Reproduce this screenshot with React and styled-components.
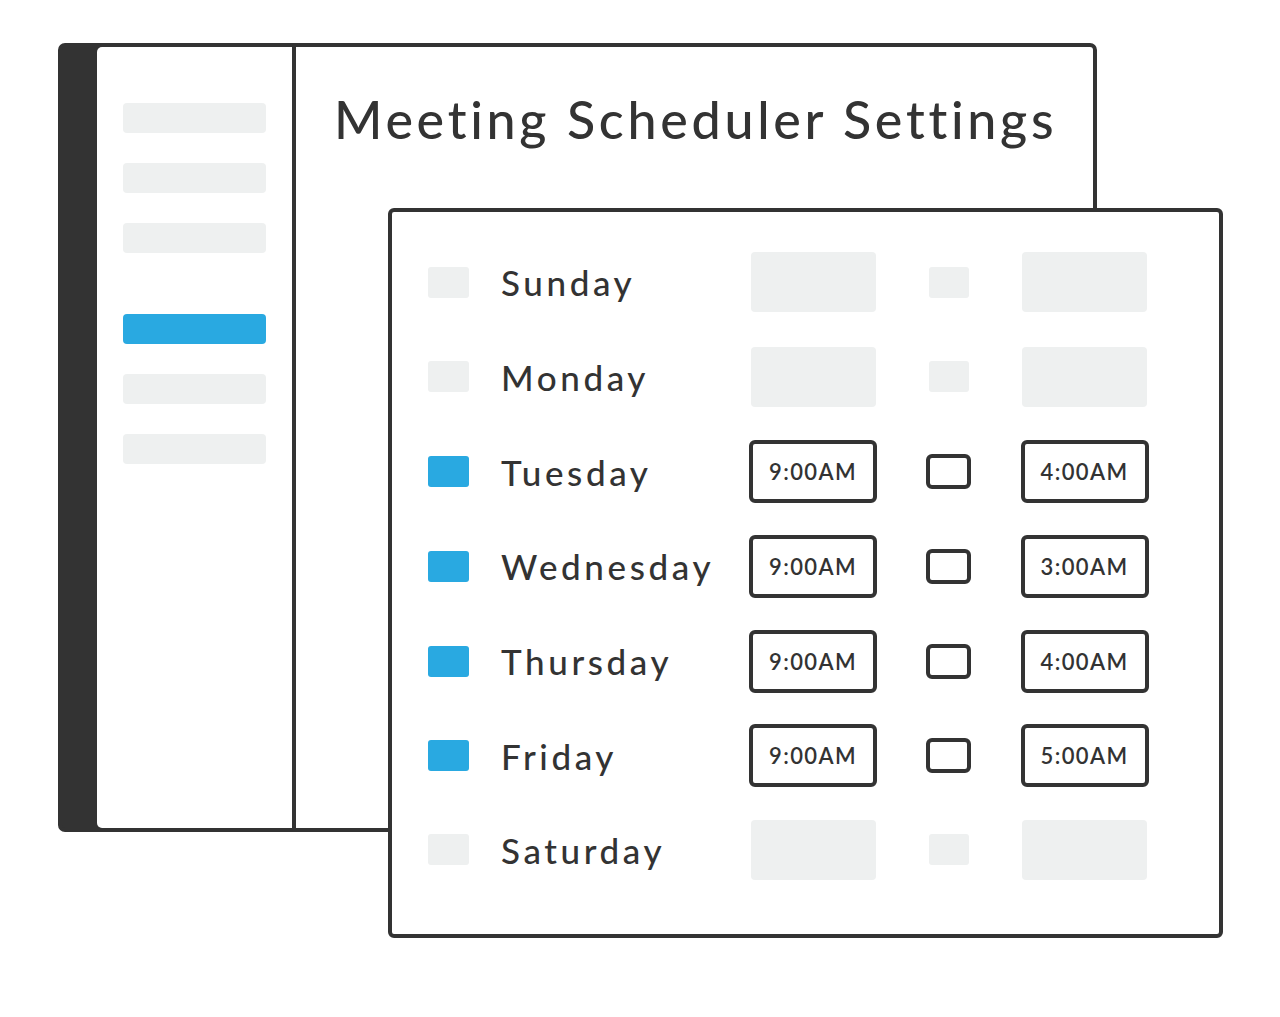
import React from 'react';
import styled, { createGlobalStyle } from 'styled-components';

const Global = createGlobalStyle`
  html, body { margin: 0; padding: 0; background: #fff; }
  body { font-family: Lato, "Open Sans", sans-serif; color: #333; }
`;

const INK = '#333333';
const GRAY = '#eef0f0';
const BLUE = '#29a9e1';

// page stage
const Stage = styled.div`
  position: relative;
  width: 1280px;
  height: 1017px;
  padding: 43px 0 0 58px;
  box-sizing: border-box;
`;

// back window
const Window = styled.div`
  width: 1039px;
  height: 789px;
  box-sizing: border-box;
  border: 4px solid ${INK};
  border-radius: 7px;
  background: ${INK};
  display: flex;
  overflow: hidden;
`;

const Sidebar = styled.div`
  margin-left: 35px;
  width: 199px;
  box-sizing: border-box;
  background: #fff;
  border-right: 4px solid ${INK};
  border-radius: 5px 0 0 5px;
  padding: 56px 0 0 26px;
  display: flex;
  flex-direction: column;
  gap: 30px;
`;

const NavItem = styled.div`
  width: 143px;
  height: 30px;
  border-radius: 4px;
  background: ${(p) => (p.$active ? BLUE : GRAY)};
  margin-top: ${(p) => (p.$spaced ? '31px' : '0')};
`;

const Main = styled.div`
  flex: 1;
  background: #fff;
  padding: 41px 0 0 38px;
`;

const Title = styled.h1`
  margin: 0;
  font-size: 52px;
  font-weight: 500;
  letter-spacing: 3.7px;
  line-height: 62px;
  color: ${INK};
  white-space: nowrap;
`;

// front panel, lies over the back window
const Panel = styled.div`
  position: absolute;
  left: 388px;
  top: 208px;
  width: 835px;
  height: 730px;
  box-sizing: border-box;
  border: 4px solid ${INK};
  border-radius: 6px;
  background: #fff;
  padding: 39px 0 0 36px;
  display: flex;
  flex-direction: column;
  gap: 32.67px;
`;

const Row = styled.div`
  display: grid;
  grid-template-columns: 73px 249px 126px 145px 127px;
  height: 62px;
  align-items: center;
`;

const Check = styled.div`
  width: 41px;
  height: 31px;
  border-radius: 3px;
  background: ${(p) => (p.$on ? BLUE : GRAY)};
`;

const Day = styled.div`
  font-size: 35px;
  font-weight: 500;
  letter-spacing: 3.6px;
  color: ${INK};
`;

const TimeBox = styled.div`
  justify-self: center;
  width: 128px;
  height: 63px;
  box-sizing: border-box;
  border: 4px solid ${INK};
  border-radius: 6px;
  display: flex;
  align-items: center;
  justify-content: center;
  font-size: 22px;
  font-weight: 600;
  letter-spacing: 1.4px;
  color: ${INK};
`;

const Blank = styled.div`
  justify-self: center;
  width: 125px;
  height: 60px;
  border-radius: 4px;
  background: ${GRAY};
`;

const Toggle = styled.div`
  justify-self: center;
  width: 45px;
  height: 35px;
  box-sizing: border-box;
  border: 4px solid ${INK};
  border-radius: 6px;
`;

const ToggleBlank = styled.div`
  justify-self: center;
  width: 40px;
  height: 31px;
  border-radius: 3px;
  background: ${GRAY};
`;

const days = [
  { name: 'Sunday' },
  { name: 'Monday' },
  { name: 'Tuesday', from: '9:00AM', to: '4:00AM' },
  { name: 'Wednesday', from: '9:00AM', to: '3:00AM' },
  { name: 'Thursday', from: '9:00AM', to: '4:00AM' },
  { name: 'Friday', from: '9:00AM', to: '5:00AM' },
  { name: 'Saturday' },
];

const App = () => (
  <Stage>
    <Global />
    <Window>
      <Sidebar>
        <NavItem />
        <NavItem />
        <NavItem />
        <NavItem $active $spaced />
        <NavItem />
        <NavItem />
      </Sidebar>
      <Main>
        <Title>Meeting Scheduler Settings</Title>
      </Main>
    </Window>

    <Panel>
      {days.map((d) => (
        <Row key={d.name}>
          <Check $on={!!d.from} />
          <Day>{d.name}</Day>
          {d.from ? <TimeBox>{d.from}</TimeBox> : <Blank />}
          {d.from ? <Toggle /> : <ToggleBlank />}
          {d.from ? <TimeBox>{d.to}</TimeBox> : <Blank />}
        </Row>
      ))}
    </Panel>
  </Stage>
);

export default App;
